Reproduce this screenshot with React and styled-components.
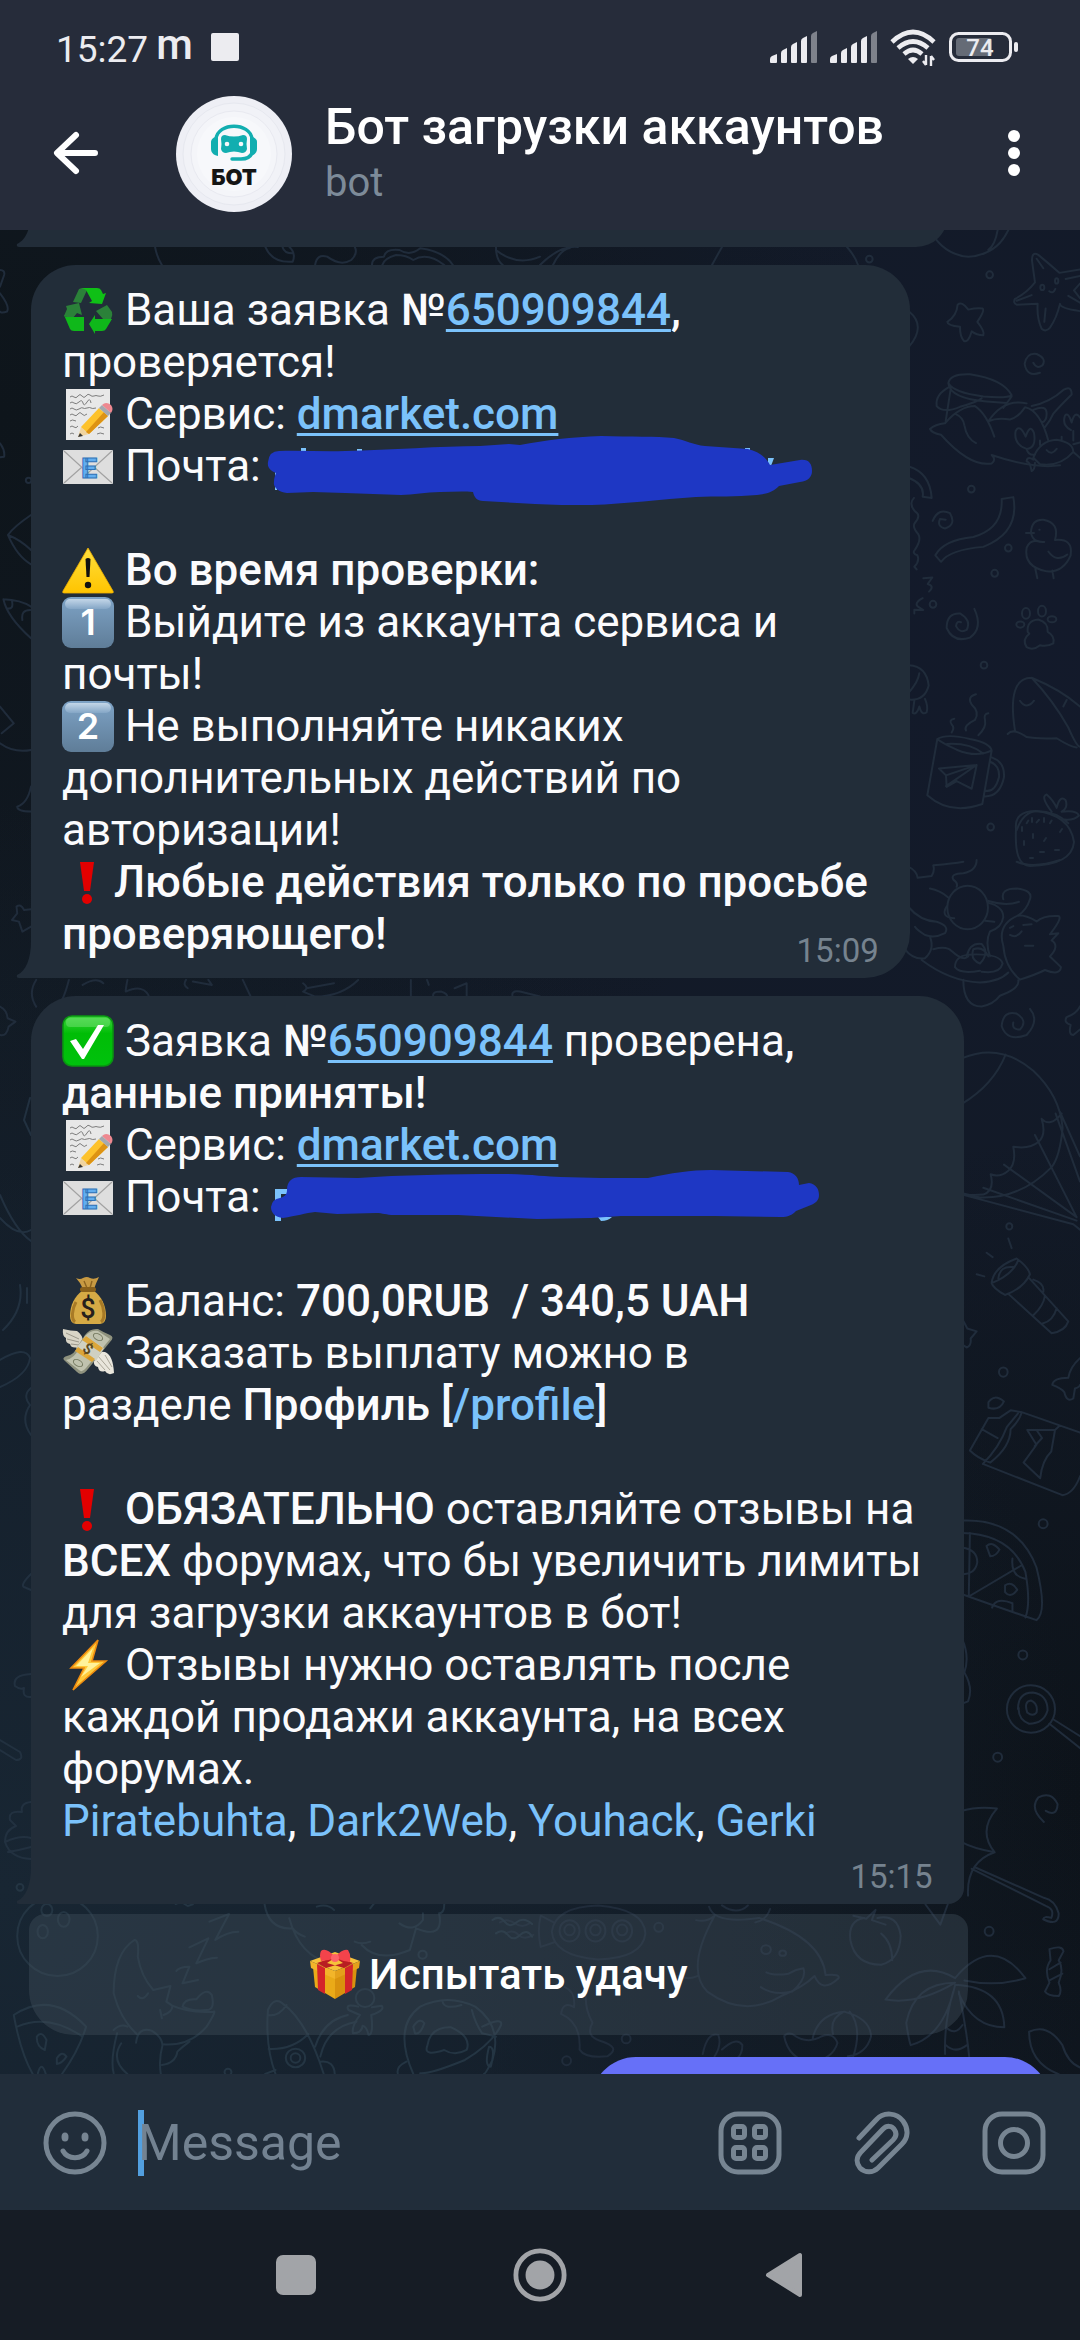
import React from 'react';
import styled, { createGlobalStyle } from 'styled-components';

const GlobalStyle = createGlobalStyle`
  * {
    box-sizing: border-box;
    margin: 0;
    padding: 0;
  }
  body {
    background-color: #161c25;
    font-family: Roboto, 'Noto Sans', sans-serif;
    color: #fbfbfd;
  }
  button {
    border: none;
    background: none;
    color: inherit;
    font-family: inherit;
  }
`;

const StyledScreen = styled.div`
  display: flex;
  flex-direction: column;
  height: 100vh;
  overflow: hidden;
`;

/* ---------- header ---------- */

const StyledHeader = styled.header`
  background-color: #262c3a;
  flex: none;
`;

const StyledStatusBar = styled.div`
  display: flex;
  align-items: center;
  justify-content: space-between;
  height: 94px;
  padding: 0 62px 0 56px;
  color: #ececf0;
`;

const StyledStatusGroup = styled.div`
  display: flex;
  align-items: center;
  gap: ${({ gap }) => gap};
`;

const StyledClock = styled.span`
  font-size: 37px;
  padding-top: 4px;
`;

const StyledCarrier = styled.span`
  font-size: 42px;
  font-weight: 500;
  padding: 0 10px 6px 0;
`;

const StyledStopMark = styled.span`
  width: 28px;
  height: 28px;
  border-radius: 2px;
  background-color: #ececf0;
`;

const StyledToolbar = styled.div`
  display: flex;
  align-items: center;
  height: 136px;
  padding: 0 40px 16px 50px;
`;

const StyledIconButton = styled.button`
  display: flex;
  align-items: center;
  justify-content: center;
  flex: none;
  width: ${({ size }) => size};
  height: 64px;
`;

const StyledAvatar = styled.svg`
  width: 116px;
  height: 116px;
  margin: 0 33px 0 74px;
  flex: none;
`;

const StyledPeer = styled.div`
  flex: 1;
`;

const StyledTitle = styled.h1`
  font-size: 50px;
  font-weight: 500;
  line-height: 58px;
  white-space: nowrap;
  color: #fff;
`;

const StyledSubtitle = styled.p`
  font-size: 40px;
  line-height: 54px;
  color: #7d8b99;
`;

/* ---------- chat ---------- */

const StyledChat = styled.main`
  position: relative;
  display: flex;
  flex-direction: column;
  align-items: flex-start;
  flex: 1;
  min-height: 0;
  padding: 0 30px 0 31px;
  overflow: hidden;
  background-color: #121a25;
  background-image: radial-gradient(circle at 0% 90%, #182633 0%, rgba(24, 38, 51, 0) 55%),
    radial-gradient(circle at 100% 85%, #0d131a 0%, rgba(13, 19, 26, 0) 35%),
    radial-gradient(circle at 0% 10%, #0e151b 0%, rgba(14, 21, 27, 0) 45%),
    radial-gradient(circle at 100% 20%, #131a2b 0%, rgba(19, 26, 43, 0) 60%);
`;

const StyledWallpaper = styled.svg`
  position: absolute;
  inset: 0;
  width: 100%;
  height: 100%;
  fill: none;
  stroke: #202c3b;
  stroke-width: 2;
  stroke-linecap: round;
  stroke-linejoin: round;
  path,
  circle,
  ellipse {
    vector-effect: non-scaling-stroke;
  }
`;

const StyledBubble = styled.article`
  position: relative;
  display: grid;
  flex: none;
  padding: 19px 31px 8px;
  border-radius: 45px 45px ${({ grouped }) => (grouped ? '16px' : '45px')} 0;
  background-color: #222d39;
`;

const StyledTail = styled.svg`
  position: absolute;
  left: -15px;
  bottom: 0;
  width: 16px;
  height: 37px;
  fill: #222d39;
`;

const StyledCutBubble = styled(StyledBubble)`
  width: 90%;
  height: 64px;
  margin: -47px 0 18px;
`;

const StyledOwnBubble = styled.div`
  position: relative;
  flex: none;
  align-self: flex-end;
  width: 45%;
  height: 90px;
  margin-top: 22px;
  border-radius: 45px;
  background-color: #6670f8;
`;

const StyledBody = styled.p`
  grid-area: 1 / 1;
  padding: 0 11px 10px 0;
  font-size: 44px;
  line-height: 52px;
  white-space: pre-wrap;
  b {
    font-weight: 500;
  }
`;

const StyledTime = styled.time`
  grid-area: ${({ below }) => (below ? '2 / 1' : '1 / 1')};
  align-self: end;
  justify-self: end;
  font-size: 33px;
  line-height: 39px;
  color: #76838f;
`;

const StyledLink = styled.a`
  color: #7bc2fb;
  font-weight: ${({ strong }) => (strong ? 500 : 'inherit')};
  text-decoration: ${({ underlined }) => (underlined ? 'underline' : 'none')};
  text-decoration-thickness: 3px;
  text-underline-offset: 4px;
  text-decoration-skip-ink: none;
`;

const StyledEmoji = styled.svg`
  display: inline-block;
  width: 52px;
  height: 52px;
  vertical-align: top;
`;

const StyledHidden = styled.span`
  position: relative;
  display: inline-block;
  height: 52px;
  vertical-align: top;
  svg {
    position: absolute;
    left: -11px;
    top: -10px;
    width: 560px;
    height: 80px;
  }
`;

const StyledGroup = styled.section`
  display: flex;
  flex-direction: column;
  position: relative;
  flex: none;
  margin-top: 18px;
`;

const StyledInlineButton = styled.button`
  display: flex;
  align-items: center;
  justify-content: center;
  gap: 8px;
  height: 121px;
  margin: 10px -4px 0 -2px;
  border-radius: 16px 16px 45px 45px;
  background-color: rgba(64, 78, 90, 0.42);
  font-size: 42px;
  font-weight: 500;
  color: #fff;
`;

/* ---------- footer ---------- */

const StyledComposer = styled.form`
  display: flex;
  align-items: center;
  flex: none;
  height: 136px;
  padding: 2px 34px 0 43px;
  background-color: #212d3a;
`;

const StyledCaret = styled.span`
  width: 6px;
  height: 66px;
  margin: 0 -6px 0 31px;
  background-color: #529fdf;
`;

const StyledInput = styled.input`
  flex: 1;
  min-width: 0;
  border: none;
  outline: none;
  background: transparent;
  font-family: inherit;
  font-size: 50px;
  line-height: 64px;
  color: #fbfbfd;
  &::placeholder {
    color: #738291;
    opacity: 1;
  }
`;

const StyledActions = styled.div`
  display: flex;
  gap: 68px;
`;

const StyledStrokeIcon = styled.svg`
  width: 64px;
  height: 64px;
  fill: none;
  stroke: #778592;
  stroke-width: 5;
  stroke-linecap: round;
  stroke-linejoin: round;
`;

const StyledNav = styled.nav`
  display: flex;
  align-items: center;
  justify-content: center;
  gap: 190px;
  flex: none;
  height: 130px;
  background-color: #161c25;
`;

/* ---------- status icons ---------- */

const Signal = () => (
  <svg width='48' height='32' viewBox='0 0 48 32' fill='#ececf0'>
    <path d='M0 31V28Q0 26 2 25L7 23V31Q7 32 6 32H1Q0 32 0 31Z' />
    <path d='M11 31V22Q11 20 13 19L17 17V31Q17 32 16 32H12Q11 32 11 31Z' />
    <path d='M21 31V16Q21 14 23 13L27 11V31Q27 32 26 32H22Q21 32 21 31Z' />
    <path d='M31 31V10Q31 8 33 7L37 5V31Q37 32 36 32H32Q31 32 31 31Z' />
    <path d='M41 31V5Q41 3 43 2L47 0V31Q47 32 46 32H42Q41 32 41 31Z' opacity='0.45' />
  </svg>
);

const Wifi = () => (
  <svg width='47' height='37' viewBox='0 0 47 37' fill='none' stroke='#ececf0' strokeWidth='4.6'>
    <path d='M2 13Q23 -7 44 13' />
    <path d='M8 19Q23 6 38 19' />
    <path d='M14 25Q23 17 32 25' />
    <path d='M18 30Q23 26 28 30L23 35Z' fill='#ececf0' stroke='none' />
    <path d='M36 26V36M33 32L36 36M41 37V27M44 31L41 27' strokeWidth='2.4' />
  </svg>
);

const Battery = () => (
  <svg width='69' height='30' viewBox='0 0 69 30'>
    <rect x='1.5' y='1.5' width='60' height='27' rx='8' fill='none' stroke='#ececf0' strokeWidth='3' />
    <rect x='7' y='6' width='36' height='18' rx='3' fill='#656b76' />
    <rect x='65' y='10' width='4' height='10' rx='2' fill='#ececf0' />
    <text x='31' y='24' textAnchor='middle' fontFamily='Roboto' fontWeight='500' fontSize='24' fill='#ececf0'>
      74
    </text>
  </svg>
);

const BotAvatar = () => (
  <StyledAvatar viewBox='0 0 116 116'>
    <circle cx='58' cy='58' r='58' fill='#eeeff5' />
    <circle cx='58' cy='58' r='51' fill='#f1f2f7' stroke='#e6e8ef' />
    <circle cx='58' cy='58' r='43' fill='#f4f5f9' stroke='#e8e9f0' />
    <circle cx='58' cy='58' r='37' fill='#f7f8fb' />
    <g fill='none' stroke='#12aeb0' strokeWidth='3.4' strokeLinecap='round'>
      <path d='M40 43C42 26 74 26 76 43' />
      <path d='M76 57C74 62 70 63 65 63H56' />
    </g>
    <path d='M42 40V60C37 59 35 56 35 53V46C35 43 38 41 42 40Z' fill='#12aeb0' />
    <path d='M74 40V60C79 59 81 56 81 53V46C81 43 78 41 74 40Z' fill='#12aeb0' />
    <path
      d='M49 39Q58 42 67 39Q71 39 71 43Q70 48 71 53Q70 57 66 57Q58 54 50 57Q46 57 45 53Q46 48 45 43Q45 39 49 39Z'
      fill='#12aeb0'
    />
    <circle cx='51' cy='48' r='2.3' fill='#f7f8fb' />
    <circle cx='65' cy='48' r='2.3' fill='#f7f8fb' />
    <text x='58' y='89' textAnchor='middle' fontFamily='Inter' fontWeight='900' fontSize='22' fill='#151515'>
      БОТ
    </text>
  </StyledAvatar>
);

/* ---------- emoji ---------- */

const Recycle = () => (
  <StyledEmoji viewBox='0 0 52 52'>
    <path d='M11 18L17 5L20 4H26L19 19Z' fill='#2b8139' />
    <path d='M20 4H35Q38 4 39 6L41 10L44 9L40 20L27 19L30 17L24 6Z' fill='#0fc016' />
    <path d='M4 22L17 19L20 31L15 29L10 35L2 32L5 25Z' fill='#2b8139' />
    <path d='M2 31L4 33H22V47H12Q9 47 8 45Z' fill='#0fb81a' />
    <path d='M34 27L45 21L50 28Q51 31 49 35H41Z' fill='#2b8139' />
    <path d='M27 40L33 31V35H50L44 45Q43 47 40 47H33V50Z' fill='#0fb81a' />
  </StyledEmoji>
);

const Memo = () => (
  <StyledEmoji viewBox='0 0 52 52'>
    <rect x='4' y='1' width='44' height='51' fill='#e8e8e8' />
    <path
      d='M8 9q2-2 4 0t4-1 4 0 4 0 4-1 4 1 4 0 6-1M8 15q2-2 4 0t5-1 4 1 4-1 4 1M8 21q2-2 4 0t5 0 4-1 4 0 4 0 5 0M8 27q2-2 4 0t4-1 4 0 5 0M8 33q2-2 6 0M8 39q2-2 4 0t4-1M8 46q2-2 4 0M36 40q2-2 6 0M35 46q3-2 7 0'
      fill='none'
      stroke='#707070'
      strokeWidth='0.9'
    />
    <path d='M16 49L19 39L27 46Z' fill='#f0d4a0' />
    <path d='M16 49L18 45L21 48Z' fill='#333' />
    <path d='M19 39L37 20L46 28L27 46Z' fill='#fdc22c' />
    <path d='M24 44L42 24L46 28L27 46Z' fill='#dd9314' />
    <path d='M37 20L40 17L49 25L46 28Z' fill='#a4a9b0' />
    <path d='M40 17Q44 13 49 17Q52 21 49 25Z' fill='#ee8890' />
  </StyledEmoji>
);

const Email = () => (
  <StyledEmoji viewBox='0 0 52 52'>
    <rect x='1' y='10' width='50' height='34' rx='1' fill='#dedede' />
    <path d='M2 11L26 33L50 11M2 43L20 27M50 43L32 27' fill='none' stroke='#a2a2a2' strokeWidth='1.2' />
    <text x='27' y='38' textAnchor='middle' fontFamily='Roboto' fontWeight='900' fontSize='28' fill='#62aef0' stroke='#2f72b8' strokeWidth='1'>
      E
    </text>
  </StyledEmoji>
);

const Warning = () => (
  <StyledEmoji viewBox='0 0 52 52'>
    <defs>
      <linearGradient id='warn' x2='0' y2='1'>
        <stop stopColor='#ffdf3d' />
        <stop offset='1' stopColor='#ffc400' />
      </linearGradient>
    </defs>
    <path d='M26 4L51 47Q52 49 50 49H2Q0 49 1 47Z' fill='url(#warn)' stroke='#f0ae00' strokeWidth='0.8' />
    <path d='M23.5 15Q26 13 28.5 15L27.5 33H24.5Z' fill='#111' />
    <circle cx='26' cy='41' r='3.2' fill='#111' />
  </StyledEmoji>
);

const Keycap = ({ digit }) => (
  <StyledEmoji viewBox='0 0 52 52'>
    <defs>
      <linearGradient id='key' x2='0' y2='1'>
        <stop stopColor='#7ea3c6' />
        <stop offset='1' stopColor='#5f7d98' />
      </linearGradient>
      <linearGradient id='keyshine' x2='0' y2='1'>
        <stop stopColor='#c3d6e8' />
        <stop offset='1' stopColor='#84a6c6' />
      </linearGradient>
    </defs>
    <rect x='0' y='1' width='52' height='51' rx='9' fill='url(#key)' />
    <rect x='3' y='3' width='46' height='10' rx='5' fill='url(#keyshine)' />
    <text x='26' y='39' textAnchor='middle' fontFamily='Inter' fontWeight='600' fontSize='36' fill='#fff'>
      {digit}
    </text>
  </StyledEmoji>
);

const Exclamation = () => (
  <StyledEmoji viewBox='0 0 52 52'>
    <path d='M18 6H32L28 35H22Z' fill='#e30000' />
    <circle cx='25' cy='43' r='5' fill='#e30000' />
  </StyledEmoji>
);

const Check = () => (
  <StyledEmoji viewBox='0 0 52 52'>
    <defs>
      <linearGradient id='check' x2='0' y2='1'>
        <stop stopColor='#3fd63f' />
        <stop offset='0.35' stopColor='#00bd06' />
        <stop offset='1' stopColor='#00c20d' />
      </linearGradient>
    </defs>
    <rect x='1' y='1' width='50' height='50' rx='9' fill='url(#check)' stroke='#0a9412' strokeWidth='1.6' />
    <rect x='4' y='3' width='44' height='9' rx='4' fill='#7de57d' opacity='0.45' />
    <path d='M8 26L14 24L21 34L36 10H42L22 44H20Z' fill='#fff' />
  </StyledEmoji>
);

const MoneyBag = () => (
  <StyledEmoji viewBox='0 0 52 52'>
    <path d='M14 3Q18 5 21 3Q25 1 28 3Q32 5 37 2Q34 8 32 14H21Q18 7 14 3Z' fill='#c89a42' />
    <path d='M22 6L25 13M30 6L28 13' stroke='#8c6420' strokeWidth='1.4' />
    <path d='M20 16C13 21 8 30 8 41Q8 48 14 49H38Q44 48 44 41C44 30 39 21 32 16Z' fill='#d6aa45' />
    <path d='M14 27C10 34 9 44 13 47M38 25C43 34 43 44 39 47' fill='none' stroke='#a87a26' strokeWidth='3' />
    <rect x='18' y='12' width='16' height='5' rx='2.5' fill='#8a611b' />
    <text x='26' y='43' textAnchor='middle' fontFamily='Roboto' fontWeight='500' fontSize='27' fill='#26201c'>
      $
    </text>
  </StyledEmoji>
);

const MoneyWings = () => (
  <StyledEmoji viewBox='0 0 52 52'>
    <path d='M1 2Q9 4 15 4Q21 8 21 15L17 20Q9 22 8 17Q3 16 4 11Q0 9 1 2Z' fill='#d9d5c7' />
    <path d='M4 6L17 12M5 12L17 15M9 17L17 18' stroke='#9b978a' strokeWidth='1' />
    <path d='M32 27Q36 24 43 25Q51 28 52 46Q46 49 43 44Q37 46 36 40Q31 39 32 33Z' fill='#e9e6dc' />
    <path d='M36 29L48 43M35 34L43 43M43 28L50 40' stroke='#aaa698' strokeWidth='1' />
    <path d='M23 8Q28 1 36 2Q41 5 48 8Q53 10 48 15L26 42Q20 50 15 45L3 34Q-1 31 5 29Q13 27 15 20Z' fill='#8f927e' />
    <path d='M23 9Q29 3 36 4L48 12L24 41Q20 46 17 43L4 33Q13 31 17 21Z' fill='#c0c2ae' />
    <ellipse cx='36' cy='10' rx='5' ry='3' transform='rotate(30 36 10)' fill='none' stroke='#74795f' />
    <ellipse cx='16' cy='36' rx='5' ry='3' transform='rotate(30 16 36)' fill='none' stroke='#74795f' />
    <path d='M19 15L24 9L42 21L34 34L14 21Z' fill='#cfd0c2' />
    <path d='M24 9L41 21L38 25L20 13Z' fill='#dca63a' />
    <path d='M16 20L33 32L30 35L13 24Z' fill='#dca63a' />
    <text x='26' y='27' textAnchor='middle' fontFamily='Roboto' fontWeight='700' fontSize='15' fill='#5b481d' transform='rotate(35 26 22)'>
      $
    </text>
  </StyledEmoji>
);

const Lightning = () => (
  <StyledEmoji viewBox='0 0 52 52'>
    <path d='M36 1L9 29H22L11 51L44 22H30Z' fill='#ffca3a' stroke='#ee8c10' strokeWidth='1.6' />
    <path d='M31 9L14 27H26L19 38L38 24H26Z' fill='#fff29a' />
  </StyledEmoji>
);

const Gift = () => (
  <StyledEmoji viewBox='0 0 52 52'>
    <path d='M4 18L26 27V50L6 38Z' fill='#eaaa18' />
    <path d='M48 18L26 27V50L46 38Z' fill='#d9920e' />
    <path d='M1 12L26 3L51 12L26 22Z' fill='#f6c23a' />
    <path d='M1 12L26 22V30L2 19Z' fill='#f3b52a' />
    <path d='M51 12L26 22V30L50 19Z' fill='#e4a01b' />
    <path d='M8 15L16 19V45L9 41ZM44 15L36 19V45L43 41Z' fill='#d4242a' />
    <path d='M8 14L25 8L34 14L17 19ZM44 14L27 8L18 14L35 19Z' fill='#b81d22' />
    <path d='M26 8Q17 -2 12 2Q10 6 12 12Q19 12 26 9Q33 12 41 13Q42 5 39 1Q34 -1 26 8Z' fill='#f4434b' />
    <circle cx='26' cy='9' r='4' fill='#ff6268' />
  </StyledEmoji>
);

/* ---------- hand drawn strokes over the addresses ---------- */

const MarkerOne = () => (
  <StyledHidden>
    <svg viewBox='260 430 560 80' fill='#1e37c4'>
      <path d='M300 448H305V452H300ZM356 449H361V452H356ZM744 448H749V453H744ZM767 458H773L770 466H767ZM274 472H276V490H274Z' fill='#7bc2fb' />
      <path d='M267 462Q268 451 278 451C300 450 322 452 344 451C390 450 440 446 479 446L508 444L519 445C545 440 570 437 600 436C630 437 655 436 673 438C685 440 692 445 704 446L747 449C758 452 765 457 769 465L799 460C808 459 811 464 811 471C811 477 807 481 799 482L778 486C772 492 766 494 756 495C735 497 715 496 695 497C660 499 625 504 591 505C570 505 550 505 534 504L482 501C476 501 473 497 472 492C460 491 450 492 439 492C425 492 412 495 400 495L344 493L312 492L286 493C277 492 272 487 273 482C273 478 274 476 275 473C270 471 266 468 267 462Z' />
    </svg>
  </StyledHidden>
);

const MarkerTwo = () => (
  <StyledHidden>
    <svg viewBox='260 1161 560 80' fill='#1e37c4'>
      <path d='M274 1189H287V1194H280V1221H274ZM597 1217H611Q607 1221 600 1221Z' fill='#7bc2fb' />
      <path d='M270 1207Q271 1199 279 1198C283 1197 286 1195 286 1190C286 1181 291 1177 300 1177L357 1178C400 1175 450 1174 500 1174C530 1174 545 1177 560 1177L600 1178L647 1178C670 1173 690 1170 710 1170L787 1172C794 1173 798 1178 798 1185L808 1183C815 1184 818 1189 818 1195C818 1200 815 1203 810 1205L795 1211C791 1215 787 1217 780 1217L713 1216L620 1216L590 1218L536 1219L457 1215L393 1215C385 1215 382 1213 375 1213L336 1214L314 1212C305 1213 295 1216 282 1218C274 1217 270 1213 270 1207Z' />
    </svg>
  </StyledHidden>
);

/* ---------- chat wallpaper ---------- */

const Wallpaper = () => (
  <StyledWallpaper viewBox='0 230 1080 1844' preserveAspectRatio='xMaxYMin slice' aria-hidden='true'>
    {/* sea side: starfish, crab, duck, paw, mug */}
    <g transform='translate(860 230) scale(0.3333 0.3827)'>
      <path d='M210 0Q250 65 325 70Q410 65 445 0M413 0Q405 40 385 52' />
      <path d='M525 137L516 80Q515 55 535 65Q570 90 598 112L660 103M525 137Q500 165 465 180Q458 190 470 195Q500 195 533 193Q530 230 545 258Q558 268 570 255Q590 230 600 193Q600 205 660 212M530 75L550 100M470 185L515 170M557 205L553 240M660 120L617 128M660 140L642 158L660 178M625 172L660 190M568 160Q580 168 586 154' />
      <ellipse cx='547' cy='150' rx='6' ry='7' />
      <ellipse cx='590' cy='133' rx='5' ry='7' />
      <path d='M262 240Q290 225 293 195Q305 185 325 208Q350 203 368 205Q375 210 352 240Q375 265 370 275Q350 275 335 265Q325 295 312 290Q300 280 300 253Q262 250 262 240Z' />
      <path d='M147 213Q200 250 147 305M540 373Q500 385 494 350Q500 320 530 324Q560 335 548 353Q530 365 520 347' />
      <path d='M265 400Q270 375 330 377Q430 390 455 432Q440 440 370 435Q280 425 265 400ZM265 400Q270 440 380 448L440 452M268 410Q225 430 230 460Q250 480 300 462Q350 450 365 440M272 415L257 500M455 435L430 465' />
      <path d='M210 520Q225 508 255 505Q300 460 345 460Q380 480 403 540M210 520Q215 530 243 535Q330 620 395 610Q410 600 395 588Q520 625 600 615M285 480Q310 490 313 510Q320 545 348 557M385 500Q410 490 450 495Q475 490 495 463Q540 470 565 550M385 500Q430 440 500 453M515 460Q570 450 610 418Q635 405 635 430Q600 460 580 480Q570 500 555 515M520 470Q560 455 560 480Q560 500 545 503' />
      <path d='M520 595Q540 550 590 548Q640 555 640 580Q600 620 540 612ZM500 572Q460 560 467 525Q480 505 497 540Q510 505 522 530Q530 570 500 572ZM500 572Q505 590 525 587M540 562V550M605 548V540M633 523Q605 510 615 485Q625 475 635 503Q645 470 660 490M640 525V550M560 575Q575 590 590 572M520 600Q500 590 500 605Q510 605 515 630Q525 625 525 608M640 560L660 555M640 580L660 595' />
      <path d='M147 618Q210 635 215 700L188 697Q195 665 147 648M162 700Q145 715 165 735Q185 745 165 765Q155 775 175 795Q185 810 165 835Q155 845 172 850Q180 865 163 880L170 887' />
      <path d='M425 703L460 698Q480 790 370 828Q270 835 243 867L226 850Q250 810 340 802Q430 780 425 703ZM218 760Q235 725 270 740Q290 770 255 780Q230 775 240 755L257 757' />
      <path d='M513 790Q515 755 550 757Q600 765 585 810Q640 805 632 850Q610 895 560 892Q490 880 500 830Q510 810 530 813Q515 805 513 790ZM498 792H522M530 812Q540 816 553 815M565 840Q590 870 622 848M526 885L532 910M577 890L581 910M538 783h1' />
      <path d='M190 910L217 908L203 925Q225 930 207 945M188 962Q160 975 175 985L190 993L163 992V1002M343 990Q370 1040 330 1065Q280 1080 260 1040Q260 1000 300 1002Q335 1020 320 1045Q300 1055 288 1035Q290 1020 303 1025' />
      <path d='M503 1050Q500 1020 535 1018Q565 1025 563 1050Q585 1060 580 1080Q560 1090 540 1085Q520 1100 500 1090Q485 1070 508 1055Z' />
      <ellipse cx='481' cy='1031' rx='12' ry='8' />
      <ellipse cx='498' cy='1002' rx='12' ry='14' />
      <ellipse cx='546' cy='996' rx='12' ry='14' />
      <ellipse cx='576' cy='1017' rx='13' ry='8' />
      <path d='M147 1137Q200 1140 206 1190Q195 1230 147 1227M178 1158Q175 1180 147 1208M163 1230L158 1262Q170 1268 178 1245Q185 1270 200 1260Q205 1245 195 1225' />
      <path d='M465 1308Q440 1170 515 1170Q580 1230 625 1300Q650 1350 660 1350M515 1170Q600 1200 660 1245M443 1317Q460 1300 500 1325Q530 1330 590 1328Q630 1350 650 1352M480 1230Q500 1255 522 1230M610 1245L620 1228' />
      <path d='M348 1213Q320 1220 335 1240Q360 1260 345 1280Q310 1295 318 1308M283 1277Q265 1280 275 1292Q285 1300 275 1313M385 1263Q370 1265 375 1280Q380 1300 355 1320' />
      <path d='M232 1330Q260 1315 330 1330Q390 1340 395 1360Q350 1380 290 1358Q245 1340 232 1330L202 1477Q270 1530 367 1500L395 1360M262 1343Q330 1340 370 1368M395 1378Q435 1390 432 1430Q420 1480 375 1480M392 1390Q420 1400 417 1430Q405 1470 377 1465M237 1407L350 1398L335 1460L290 1440L260 1455L258 1425ZM258 1425L350 1398L258 1453' />
      <path d='M470 1568Q490 1520 530 1518Q590 1520 625 1550M575 1520Q540 1480 560 1475Q580 1490 590 1510Q600 1475 617 1490Q625 1510 605 1520Q650 1515 657 1530Q640 1545 605 1540M500 1550L505 1543M530 1548L537 1541M570 1550L575 1543' />
      {[[28, 76], [389, 117], [334, 677], [445, 831], [404, 897], [219, 978], [372, 1137], [392, 1560]].map(([x, y]) => (
        <ellipse key={y} cx={x} cy={y} rx='10' ry='9' />
      ))}
    </g>
    {/* strawberry */}
    <path d='M1016 829Q1014 811 1036 811Q1070 815 1074 842Q1072 865 1030 866Q1014 866 1016 829ZM1022 831V827M1032 822V818M1044 822V818M1033 838V834M1046 838L1044 841M1060 832L1062 829M1024 845V841M1040 852H1044M1055 850H1059M1030 858H1033' />
    {/* cat, parachute, flashlight */}
    <g transform='translate(600 860) scale(0.3333 0.3571)'>
      <path d='M927 20Q950 30 953 50L995 45Q1005 30 1000 15Q1060 10 1090 5M1130 0Q1130 30 1090 37Q1050 38 1060 55Q1075 65 1070 75M990 80Q1020 85 1045 105M1250 5Q1300 25 1380 0' />
      <circle cx='1103' cy='133' r='61' />
      <path d='M1040 130Q1020 160 1063 163M1165 120Q1210 130 1210 160Q1205 190 1170 200Q1155 230 1170 270M1155 170L1183 173M927 133Q960 170 1010 173Q1050 185 1035 205Q1005 220 975 210Q950 195 945 187M915 250Q940 280 975 275Q1005 250 990 215M1000 250Q1040 240 1055 255Q1090 285 1105 270M965 280Q1050 340 1140 343Q1200 340 1225 315M1065 300Q1065 270 1105 265Q1200 260 1208 290Q1200 320 1145 313M1065 300Q1080 320 1140 310' />
      <path d='M1210 110Q1200 80 1250 80Q1300 85 1290 110Q1280 140 1255 155M1165 115Q1220 130 1257 117' />
      <path d='M1255 155Q1190 180 1210 240Q1215 300 1260 335Q1310 320 1335 308Q1380 325 1383 300L1350 270Q1380 240 1355 225L1375 205L1350 208Q1390 160 1375 157Q1330 155 1310 172Q1280 155 1255 155ZM1230 190L1240 185M1230 210Q1250 220 1265 200M1270 182L1295 180M1275 240H1300' />
      <path d='M1100 270Q1110 230 1145 235Q1170 260 1140 290Q1110 280 1120 250Q1150 240 1165 270M1090 335Q1090 410 1145 410Q1180 405 1200 380Q1260 360 1255 337M1290 417Q1320 450 1280 490Q1220 510 1205 465Q1210 420 1250 430Q1285 450 1260 475Q1235 475 1240 455M1440 410Q1430 430 1400 440Q1390 455 1412 462Q1405 490 1420 490L1440 475' />
      <path d='M1087 555Q1200 510 1300 590Q1380 660 1388 750Q1380 830 1355 860Q1260 950 1140 945L1087 933M1217 545Q1180 630 1087 682M1325 725Q1350 750 1385 710M1325 725Q1340 770 1315 790Q1290 810 1240 803Q1250 850 1225 870Q1200 890 1172 880Q1185 925 1150 937Q1110 940 1087 935M1367 710L1440 900M1380 705L1440 830M1305 770L1430 1000M1212 853L1430 1000M1150 918L1430 1010M1087 937L1420 1020L1440 1035' />
      <path d='M1175 1185Q1180 1140 1250 1116Q1285 1140 1290 1160Q1270 1200 1215 1218Q1180 1200 1175 1185ZM1175 1185Q1240 1160 1255 1120M1195 1172Q1200 1135 1240 1140M1225 1215L1355 1325Q1395 1320 1405 1292L1285 1168M1335 1220Q1330 1250 1300 1275M1370 1255Q1360 1290 1328 1298M1300 1175Q1335 1185 1330 1210M1130 1160L1153 1166M1160 1100L1178 1112M1225 1060L1235 1087' />
      <path d='M1087 1285L1102 1312L1130 1320L1112 1340Q1115 1360 1100 1365L1087 1357M1440 1395Q1410 1420 1405 1450Q1360 1450 1357 1470Q1385 1480 1393 1490Q1400 1520 1420 1508L1425 1480Q1440 1475 1440 1470' />
      <circle cx='1228' cy='1026' r='9' />
      <circle cx='1210' cy='1434' r='13' />
    </g>
    {/* chocolate, pizza, lollipop, umbrella, submarine, whale, palm */}
    <g transform='translate(500 1380) scale(0.37 0.4464)'>
      <path d='M1320 85L1270 158Q1290 175 1325 185Q1380 150 1380 110Q1405 90 1410 72L1568 118M1320 85H1350L1380 68L1410 72M1305 188L1520 258Q1550 255 1568 215M1305 188Q1350 150 1370 105L1400 75M1302 110L1345 130M1320 50Q1335 30 1362 48Q1350 70 1320 62ZM1425 112L1500 112L1513 102M1425 112L1450 145L1415 185L1460 220Q1465 180 1490 160L1500 112M1450 112L1465 130L1445 148' />
      <path d='M1249 315Q1400 310 1450 420Q1480 520 1450 538Q1350 510 1249 480M1249 343Q1380 345 1420 430Q1435 500 1420 532M1270 343L1267 485L1410 415M1249 375Q1290 380 1290 408Q1285 435 1249 435M1385 400Q1380 440 1420 445M1330 510Q1340 485 1385 500V518M1315 372Q1330 360 1350 380Q1340 395 1325 395ZM1365 460Q1385 450 1398 470Q1380 490 1365 475Z' />
      <ellipse cx='1435' cy='737' rx='65' ry='53' />
      <path d='M1400 737Q1400 700 1440 700Q1480 705 1480 740Q1470 770 1430 770Q1400 760 1402 735M1425 745Q1415 720 1435 718Q1455 725 1450 745Q1440 755 1425 745M1485 770L1568 825M1495 760L1568 798M1249 580Q1270 620 1255 655Q1280 690 1265 720L1249 725' />
      <path d='M1470 990Q1430 960 1455 935Q1490 920 1507 950Q1505 980 1475 965M1249 965Q1290 955 1343 960Q1290 1010 1337 1058Q1280 1050 1249 1036M1337 1058Q1260 1080 1265 1155M1275 1095L1475 1178Q1500 1185 1490 1205Q1470 1200 1468 1208Q1510 1225 1510 1195Q1500 1165 1470 1160L1285 1092M1150 1175L1190 1220L1210 1175' />
      <path d='M140 1235Q150 1180 265 1177Q390 1185 393 1240Q385 1295 265 1298Q145 1290 140 1235ZM145 1215L110 1200Q100 1235 110 1270L145 1260M0 1215Q20 1205 40 1217T80 1217M15 1240Q35 1230 50 1243T90 1243' />
      {[188, 258, 330].map((x) => (
        <React.Fragment key={x}>
          <ellipse cx={x} cy='1234' rx='27' ry='24' />
          <ellipse cx={x} cy='1232' rx='14' ry='12' />
        </React.Fragment>
      ))}
      <path d='M580 1200Q500 1320 560 1370Q660 1430 760 1380Q820 1360 850 1335Q870 1375 915 1340Q920 1330 880 1333Q870 1250 700 1205M580 1200Q560 1215 530 1210M705 1360Q740 1380 790 1370Q830 1340 820 1318Q800 1320 780 1330Q740 1335 720 1327M565 1180Q580 1220 700 1205M730 1185Q720 1210 690 1215M600 1177Q640 1200 670 1177M480 1335Q510 1345 535 1335' />
      <ellipse cx='719' cy='1276' rx='13' ry='10' />
      <ellipse cx='764' cy='1284' rx='9' ry='6' />
      <path d='M985 1205Q940 1210 947 1255Q960 1310 1030 1310Q1080 1300 1083 1245Q1075 1195 1020 1205M955 1200L990 1207L1015 1187L1005 1210L1042 1220M1030 1240Q1060 1260 1060 1300' />
      <path d='M1230 1340Q1130 1290 1042 1388Q1130 1400 1230 1350Q1120 1350 1098 1440Q1105 1480 1110 1490Q1200 1470 1230 1355Q1360 1360 1363 1450Q1280 1450 1240 1375M1230 1340Q1330 1240 1420 1340Q1340 1360 1255 1345M1225 1370Q1200 1440 1203 1510M1240 1370Q1260 1450 1268 1515M1205 1450Q1230 1470 1250 1445M1205 1490Q1230 1510 1262 1490' />
      <path d='M1485 1275Q1520 1265 1523 1280L1510 1300Q1525 1320 1510 1350Q1520 1370 1510 1380Q1480 1380 1473 1370L1485 1350Q1470 1320 1488 1300ZM1485 1320L1515 1305M1485 1345L1520 1330M1430 1460Q1480 1440 1520 1490Q1535 1530 1568 1540M1430 1460Q1430 1530 1510 1555' />
      <path d='M768 1470Q780 1520 840 1530Q900 1520 912 1485Q900 1460 870 1470Q830 1490 790 1465Q775 1462 768 1470ZM845 1475Q860 1420 930 1415Q1000 1430 1003 1470Q990 1510 940 1515M930 1415Q890 1430 900 1465M945 1415Q980 1450 955 1515M548 1510Q560 1460 590 1467Q600 1490 580 1515M600 1500Q640 1470 655 1490Q655 1510 640 1520M165 1420Q170 1390 200 1405Q205 1370 175 1360M165 1420Q220 1440 215 1500Q230 1520 290 1515Q330 1495 270 1480Q230 1470 250 1440Q230 1410 232 1380' />
      {[[1468, 322], [1413, 616], [1345, 845], [1322, 1235], [429, 1226], [341, 1476], [180, 1525]].map(([x, y]) => (
        <ellipse key={y} cx={x} cy={y} rx='12' ry='10' />
      ))}
    </g>
    {/* moon, melon, rocket, planet */}
    <g transform='translate(0 1860) scale(0.3444 0.3333)' stroke='#243543'>
      <ellipse cx='167' cy='228' rx='117' ry='120' />
      <ellipse cx='136' cy='150' rx='16' ry='18' />
      <ellipse cx='185' cy='178' rx='17' ry='22' />
      <ellipse cx='124' cy='215' rx='15' ry='20' />
      <path d='M400 290Q405 240 390 240Q330 280 330 400Q350 480 400 525M400 290Q410 350 445 390L495 378L483 425L500 437Q550 460 620 455Q630 450 600 500Q550 560 472 553M530 440Q535 415 570 418Q600 380 615 405Q625 450 600 450Q560 455 530 440ZM400 408Q415 425 430 400M465 450L470 475M475 465Q500 455 500 440' />
      <path d='M512 333Q520 320 550 320L530 370L575 360M550 262L605 235L570 310Q600 295 630 293M608 185L665 162L625 240Q660 215 692 215' />
      <path d='M40 465Q150 390 250 500Q230 570 180 642M40 465Q60 580 95 642M50 500Q140 460 240 530M107 530Q120 510 135 540L130 570Q105 560 107 530ZM165 595Q180 570 193 590Q180 610 165 612ZM110 640Q120 600 133 642' />
      <path d='M395 548Q400 500 440 512Q470 530 472 555Q460 600 467 642M330 510Q350 490 370 500M352 550Q320 600 370 642M550 545Q530 560 515 575Q510 610 470 615M340 520Q320 600 330 640' />
      <path d='M800 642Q770 560 778 450Q795 410 820 430Q890 480 940 642M778 465Q810 470 832 435M780 567Q850 570 895 522M915 560Q940 480 1010 465M930 590Q950 500 1035 485M930 605Q970 600 972 642M770 642L800 630' />
      <circle cx='858' cy='594' r='28' />
      <circle cx='858' cy='594' r='14' />
      <circle cx='1060' cy='414' r='27' />
      <path d='M1040 440Q1000 430 1012 450L1045 465Q1020 500 1025 520Q1050 520 1053 497Q1065 500 1070 525Q1085 525 1078 465Q1120 450 1108 437L1080 442' />
      <path d='M1200 642Q1140 500 1220 440Q1300 400 1380 440Q1460 500 1430 600Q1410 642 1405 642M1285 425Q1290 450 1340 435M1370 450Q1380 490 1400 520L1440 530M1245 540Q1260 500 1310 502Q1370 530 1355 570Q1320 590 1290 570Q1230 590 1240 560ZM1400 500Q1460 470 1455 495Q1430 550 1350 600Q1250 642 1220 640M1200 500Q1220 470 1232 490Q1220 525 1205 520ZM1155 640Q1150 620 1180 605M1420 560Q1440 560 1425 620Q1405 620 1420 560Z' />
      <path d='M768 132Q780 210 850 205M840 175Q870 290 960 310M885 230Q860 220 850 205M1160 190Q1200 220 1228 180V160M1030 245Q1050 255 1075 245M1050 255Q1100 310 1190 270L1208 205Q1290 240 1275 160Q1290 160 1290 132M920 140Q950 130 970 150M1075 145L1085 132M510 132L525 125L545 138L560 133M1430 180Q1450 165 1465 185T1500 187 1545 192M1440 220Q1460 205 1475 225T1510 225 1545 230' />
      <circle cx='58' cy='82' r='10' />
      <circle cx='1227' cy='284' r='12' />
      <circle cx='662' cy='636' r='10' />
    </g>
    {/* left edge */}
    <g transform='translate(0 250) scale(0.3444 0.3333)'>
      <path d='M0 60Q15 60 12 75L0 110M0 130Q30 170 20 185Q5 190 0 185M0 580Q15 600 12 620L0 622M90 795Q40 830 23 855Q50 920 90 943M23 855Q60 870 90 900M10 1048Q60 1050 90 1070M10 1048Q20 1100 90 1165M20 1075Q40 1080 35 1055M65 1110Q60 1080 88 1080M0 1370L40 1420L5 1450M0 1480Q40 1510 90 1500M90 1610Q80 1660 50 1670Q50 1685 90 1685M35 2010L50 1990L48 1970Q60 1960 70 1980L90 1978M35 2010L55 2015L65 2045L90 2030M0 2270Q20 2280 22 2305L45 2315L25 2330Q20 2360 0 2355M105 2190Q80 2230 105 2270M200 2190Q190 2230 180 2250M240 2205Q280 2180 300 2200M370 2190Q365 2215 365 2225Q420 2200 435 2245M540 2190Q530 2205 545 2215M560 2195L615 2205L605 2190M705 2190L730 2245M880 2200Q900 2215 880 2225L915 2240Q990 2240 1040 2190M890 2215L970 2200M1193 2190V2245M1260 2245Q1250 2225 1280 2225Q1300 2230 1300 2245M1240 2190L1245 2205M1320 2215L1355 2200V2240M1490 2245Q1480 2220 1510 2225L1568 2240' />
      <circle cx='83' cy='691' r='8' />
      <path d='M450 -10Q455 20 470 45M770 -10Q790 40 850 35Q860 10 840 -10M820 -10Q825 10 850 10M915 45Q920 10 950 20Q990 50 1020 30Q1040 10 1030 -10M1080 45Q1080 20 1115 20Q1120 -5 1160 0Q1190 20 1220 -5Q1290 5 1315 45M1110 45Q1115 25 1150 15Q1180 15 1200 30Q1240 5 1290 45M1440 -10Q1440 30 1460 45M1440 0Q1500 50 1568 20' />
    </g>
    <path d='M540 265Q560 245 578 247M553 265Q560 250 570 248M712 265Q718 254 722 247M847 247Q855 256 858 265' />
    <g stroke='#223140'>
      <path d='M30 1098L24 1120L31 1135M0 1195Q15 1230 31 1241M0 1218Q18 1238 31 1230M20 1285Q24 1310 3 1330M27 1288V1303M0 1360Q25 1345 30 1358Q28 1375 0 1387M31 1388Q22 1395 30 1405Q20 1420 31 1435' />
      <path d='M31 1574Q20 1585 24 1587L31 1590M31 1674Q12 1675 15 1686Q20 1690 24 1688Q22 1698 31 1697M0 1740L20 1752Q24 1760 16 1760L0 1750M31 1802Q20 1803 22 1812Q8 1810 10 1820L16 1826Q5 1830 5 1842Q10 1858 31 1859M5 1842Q20 1835 31 1838M8 1852Q20 1850 31 1847' />
    </g>
  </StyledWallpaper>
);

const Tail = () => (
  <StyledTail viewBox='0 0 16 37'>
    <path d='M16 0H15C15 18 10 30 1 34Q0 37 3 37H16Z' />
  </StyledTail>
);

const FORUMS = ['Piratebuhta', 'Dark2Web', 'Youhack', 'Gerki'];

const App = () => {
  return (
    <StyledScreen>
      <GlobalStyle />
      <StyledHeader>
        <StyledStatusBar>
          <StyledStatusGroup gap='8px'>
            <StyledClock>15:27</StyledClock>
            <StyledCarrier>m</StyledCarrier>
            <StyledStopMark />
          </StyledStatusGroup>
          <StyledStatusGroup gap='12px'>
            <Signal />
            <Signal />
            <Wifi />
            <Battery />
          </StyledStatusGroup>
        </StyledStatusBar>
        <StyledToolbar>
          <StyledIconButton size='52px' type='button' aria-label='Back'>
            <svg width='52' height='52' viewBox='0 0 52 52' fill='none' stroke='#fff' strokeWidth='6' strokeLinecap='round' strokeLinejoin='round'>
              <path d='M26 7L7 25L26 43M8 25H45' />
            </svg>
          </StyledIconButton>
          <BotAvatar />
          <StyledPeer>
            <StyledTitle>Бот загрузки аккаунтов</StyledTitle>
            <StyledSubtitle>bot</StyledSubtitle>
          </StyledPeer>
          <StyledIconButton size='52px' type='button' aria-label='Menu'>
            <svg width='12' height='48' viewBox='0 0 12 48' fill='#fff'>
              <circle cx='6' cy='6' r='6' />
              <circle cx='6' cy='23' r='6' />
              <circle cx='6' cy='40' r='6' />
            </svg>
          </StyledIconButton>
        </StyledToolbar>
      </StyledHeader>

      <StyledChat>
        <Wallpaper />
        <StyledCutBubble>
          <Tail />
        </StyledCutBubble>

        <StyledBubble>
          <Tail />
          <StyledBody>
            <Recycle /> Ваша заявка{' '}
            <b>
              №
              <StyledLink href='#request' underlined>
                650909844
              </StyledLink>
              ,
            </b>
            <br />
            проверяется!
            <br />
            <Memo /> Сервис:{' '}
            <StyledLink href='#service' underlined strong>
              dmarket.com
            </StyledLink>
            <br />
            <Email /> Почта: <MarkerOne />
            <br />
            <br />
            <Warning /> <b>Во время проверки:</b>
            <br />
            <Keycap digit='1' /> Выйдите из аккаунта сервиса и<br />
            почты!
            <br />
            <Keycap digit='2' /> Не выполняйте никаких
            <br />
            дополнительных действий по
            <br />
            авторизации!
            <br />
            <Exclamation />
            <b>
              Любые действия только по просьбе
              <br />
              проверяющего!
            </b>
          </StyledBody>
          <StyledTime>15:09</StyledTime>
        </StyledBubble>

        <StyledGroup>
          <StyledBubble grouped>
            <Tail />
            <StyledBody>
              <Check /> Заявка <b>№</b>
              <StyledLink href='#request' underlined strong>
                650909844
              </StyledLink>{' '}
              проверена<b>,</b>
              <br />
              <b>данные приняты!</b>
              <br />
              <Memo /> Сервис:{' '}
              <StyledLink href='#service' underlined strong>
                dmarket.com
              </StyledLink>
              <br />
              <Email /> Почта: <MarkerTwo />
              <br />
              <br />
              <MoneyBag /> Баланс: <b>700,0RUB{'  '}/ 340,5 UAH</b>
              <br />
              <MoneyWings /> Заказать выплату можно в<br />
              разделе{' '}
              <b>
                Профиль [<StyledLink href='#profile'>/profile</StyledLink>]
              </b>
              <br />
              <br />
              <Exclamation /> <b>ОБЯЗАТЕЛЬНО</b> оставляйте отзывы на
              <br />
              <b>ВСЕХ</b> форумах, что бы увеличить лимиты
              <br />
              для загрузки аккаунтов в бот!
              <br />
              <Lightning /> Отзывы нужно оставлять после
              <br />
              каждой продажи аккаунта, на всех
              <br />
              форумах.
              <br />
              {FORUMS.map((name, i) => (
                <React.Fragment key={name}>
                  {i > 0 && ', '}
                  <StyledLink href={`#${name}`}>{name}</StyledLink>
                </React.Fragment>
              ))}
            </StyledBody>
            <StyledTime below>15:15</StyledTime>
          </StyledBubble>
          <StyledInlineButton type='button'>
            <Gift />
            Испытать удачу
          </StyledInlineButton>
        </StyledGroup>

        <StyledOwnBubble />
      </StyledChat>

      <StyledComposer onSubmit={(e) => e.preventDefault()}>
        <StyledIconButton size='64px' type='button' aria-label='Emoji'>
          <StyledStrokeIcon viewBox='0 0 64 64'>
            <circle cx='32' cy='32' r='29' />
            <path d='M20 40C25 49 39 49 44 40' />
            <ellipse cx='22' cy='26' rx='3.5' ry='4.5' fill='#778592' stroke='none' />
            <ellipse cx='42' cy='26' rx='3.5' ry='4.5' fill='#778592' stroke='none' />
          </StyledStrokeIcon>
        </StyledIconButton>
        <StyledCaret />
        <StyledInput type='text' placeholder='Message' aria-label='Message' />
        <StyledActions>
          <StyledIconButton size='64px' type='button' aria-label='Commands'>
            <StyledStrokeIcon viewBox='0 0 64 64'>
              <rect x='3' y='3' width='58' height='58' rx='17' />
              <rect x='15.5' y='15.5' width='11' height='11' rx='2.5' />
              <rect x='36.5' y='15.5' width='11' height='11' rx='2.5' />
              <rect x='15.5' y='36.5' width='11' height='11' rx='2.5' />
              <rect x='36.5' y='36.5' width='11' height='11' rx='2.5' />
            </StyledStrokeIcon>
          </StyledIconButton>
          <StyledIconButton size='64px' type='button' aria-label='Attach'>
            <StyledStrokeIcon viewBox='0 0 64 64'>
              <path d='M9 27L26 9C34 0 47 2 53 10C59 18 58 27 52 33L28 57C23 62 15 62 10 57C6 52 6 46 11 41L33 18C37 14 42 15 44 18C47 22 46 26 43 29L22 49' />
            </StyledStrokeIcon>
          </StyledIconButton>
          <StyledIconButton size='64px' type='button' aria-label='Camera'>
            <StyledStrokeIcon viewBox='0 0 64 64'>
              <rect x='3' y='3' width='58' height='58' rx='17' />
              <circle cx='32' cy='32' r='13.5' />
            </StyledStrokeIcon>
          </StyledIconButton>
        </StyledActions>
      </StyledComposer>

      <StyledNav>
        <StyledIconButton size='54px' type='button' aria-label='Recent apps'>
          <svg width='40' height='40'>
            <rect width='40' height='40' rx='7' fill='#a2a4a8' />
          </svg>
        </StyledIconButton>
        <StyledIconButton size='54px' type='button' aria-label='Home'>
          <svg width='56' height='56' viewBox='0 0 56 56'>
            <circle cx='28' cy='28' r='25' fill='none' stroke='#a2a4a8' strokeWidth='5' />
            <circle cx='28' cy='28' r='15' fill='#a2a4a8' />
          </svg>
        </StyledIconButton>
        <StyledIconButton size='54px' type='button' aria-label='Go back'>
          <svg width='38' height='46' viewBox='0 0 38 46'>
            <path d='M3 23L35 3V43Z' fill='#a2a4a8' stroke='#a2a4a8' strokeWidth='4' strokeLinejoin='round' />
          </svg>
        </StyledIconButton>
      </StyledNav>
    </StyledScreen>
  );
};

export default App;
